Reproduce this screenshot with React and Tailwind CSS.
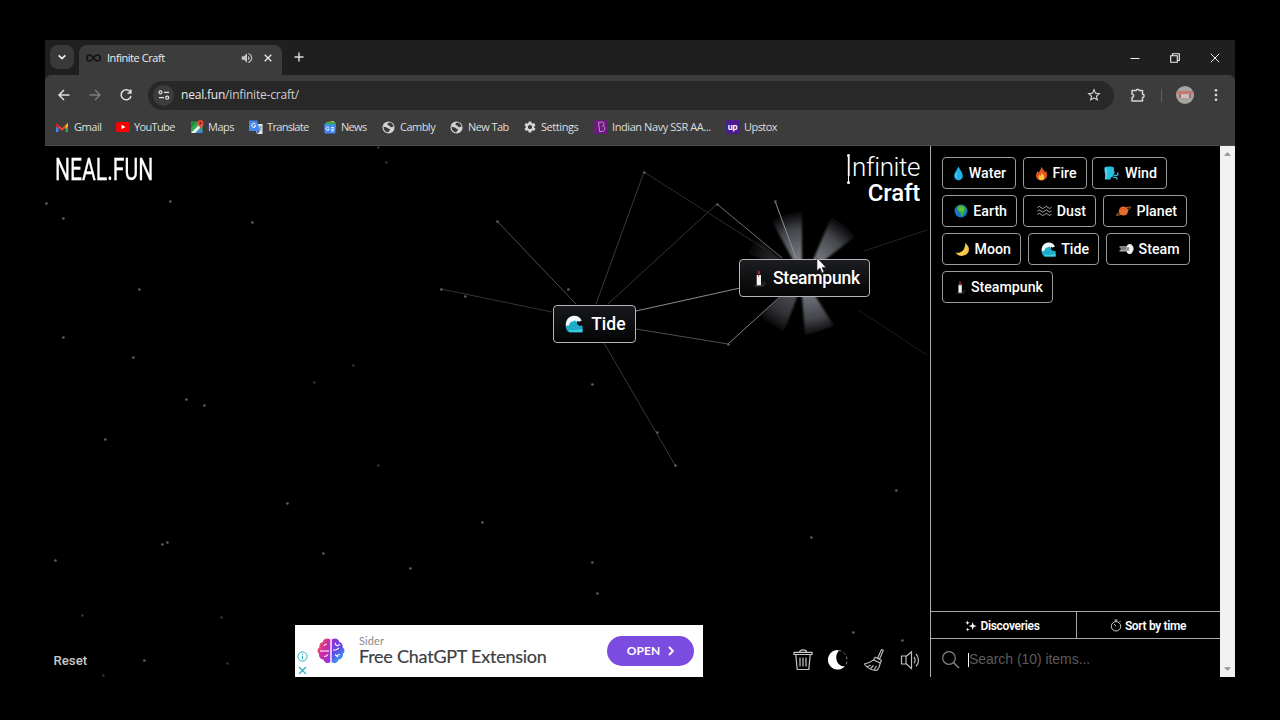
import React from "react";
import { MdStarOutline, MdVolumeUp, MdSettings } from "react-icons/md";

/* ---------- element icons ---------- */
const Svg = ({ box = "0 0 16 16", className, children }) => (
  <svg viewBox={box} className={"shrink-0 " + className} fill="none">
    {children}
  </svg>
);

const icons = {
  Water: (c) => (
    <Svg box="0 0 10 15" className={c}>
      <path d="M5 .5C6 3 9.3 6.500 9.300 10a4.300 4.300 0 0 1-8.600 0C.7 6.500 4 3 5 .5Z" fill="#1fb4e8" />
      <path d="M3 7.500c-.8 1.500-1 3 .1 4" stroke="#7fe0fb" strokeWidth="1" />
    </Svg>
  ),
  Fire: (c) => (
    <Svg box="0 0 12 15" className={c}>
      <path d="M6 .5c.3 2.500 3 3.300 3.300 6 .8-.5.9-1.400.8-2.200 1.200 1.800 1.700 4 1.300 6-.5 2.600-2.700 4.200-5.400 4.200S.9 12.900.6 10.400C.3 8 1.500 6.500 2 5c.5.5.8 1 .9 1.800C4 5 5.800 3.500 6 .5Z" fill="#e8541e" />
      <path d="M6.200 6.500c.2 1.500 2.600 2.500 2.600 4.800 0 1.700-1.200 2.800-2.800 2.800s-2.900-1.100-2.900-2.600c0-1.300.7-1.900 1-2.700.4.4.5.8.6 1.300.8-.8 1.500-1.800 1.500-3.600Z" fill="#ffc83d" />
    </Svg>
  ),
  Wind: (c) => (
    <Svg box="0 0 15 14" className={c}>
      <path d="M.8 1C4 .2 8 .2 9.800 1.500c.5 1.500 0 2.200.2 3.500l.9 1.700-1 .5.1 1.300-1 .6-.2 1.800-1.800.4-.6 2.200H.8c1-2 .2-3.500.4-5.500C.4 6 0 3.500.8 1Z" fill="#25c0de" />
      <path d="M.9 2c1.500.5 2 2 1.300 4.500S2.800 11 1.200 13" stroke="#9ce6f4" strokeWidth=".9" />
      <path d="M9.500 9.300h3.300c1.600 0 1.600-2.400.2-2.300M9 11.300h3c1.200.1 1.300 1.800.2 1.800" stroke="#3fb5d6" strokeWidth="1.300" />
    </Svg>
  ),
  Earth: (c) => (
    <Svg box="0 0 14 14" className={c}>
      <circle cx="7" cy="7" r="6.500" fill="#1673c8" />
      <path d="M4 2c2-1.300 5-1 6.500.4L12 5.500 10.800 7.300l-1 3-1.700 2.300-1.300-1L6.500 8.500 4 7.500 3 5.200Z" fill="#3fae3b" />
      <path d="M5 3.200 9 3l1 2-2 3L5 6Z" fill="#62c43e" />
    </Svg>
  ),
  Dust: (c) => (
    <Svg box="0 0 15 12" className={c}>
      {[2.500, 6, 9.500].map((y) => (
        <path key={y} d={`M.5 ${y}q1.750-2.200 3.500 0t3.500 0 3.500 0 3.500-.3`} stroke="#a3a3a3" strokeWidth="1" />
      ))}
    </Svg>
  ),
  Planet: (c) => (
    <Svg box="0 0 15 14" className={c}>
      <circle cx="7.500" cy="7" r="4.600" fill="#e8692c" />
      <path d="M4 5.500c2-1.500 4-.5 6.500-2" stroke="#d4531f" />
      <path d="M3.800 8.600C1.700 9.700.2 10.600.6 11.200c.5.7 4.500-.8 8.200-3s6.100-4.300 5.700-5c-.3-.5-1.700-.2-3.400.5" stroke="#d98232" strokeWidth="1" />
    </Svg>
  ),
  Moon: (c) => (
    <Svg box="0 0 15 15" className={c}>
      <path d="M10 1c5 3.200 5.300 9 .8 11.800C7.300 15 2.600 13.900.6 10.500 4.500 12 10.800 9 10 1Z" fill="#f5c343" />
      <path d="M3 12c4 .8 8-2 8.500-7" stroke="#ffdf7b" strokeWidth=".8" />
    </Svg>
  ),
  Tide: (c) => (
    <Svg box="0 0 18 18" className={c}>
      <path d="M1 13C-.2 7 3.500 1.500 9 1.500c3.500 0 6 1.700 7.200 4.300-1.500-.5-2.800-.4-3.700.6-1.500 2 .2 4.800 5 4.300V17.300H4C2.500 16.300 1.400 15 1 13Z" fill="#1eaccb" />
      <path d="M1 11.500C0 6 3.500.7 9 .7c3.700 0 6.700 1.800 7.800 5.300l-1.600-.3-.9 1.300-1.500-1.200-1.600 1-1.500-1.600-1.500 1.400C5 6.500 4.200 9 4 11c-.5-1-1.500-.8-3 .5Z" fill="#f4fbff" />
      <path d="M4.500 14.500c3 1.500 8 .3 13-.5v3.300H4.200Z" fill="#3ccbe2" />
    </Svg>
  ),
  Steam: (c) => (
    <Svg box="0 0 15 12" className={c}>
      <path d="M8.500 2C10 .3 13 .8 13.700 3c1.300 1.500 1.200 4.200 0 5.400-.7 2.500-3.400 3.300-5.200 1.800L7.500 8.500v-5Z" fill="#f2f2f2" />
      <path d="M.5 4H8M1.500 5.900H8.500M.5 7.800H8" stroke="#a9a9a9" strokeWidth="1.500" />
      <path d="M8 5h2.200M8 7h2.200" stroke="#444" strokeWidth="1" />
    </Svg>
  ),
  Steampunk: (c) => (
    <Svg box="0 0 12 18" className={c}>
      <path d="M2.700 6h4.300v10.500h-4.300Z" fill="#f4f4f4" />
      <path d="M4.700 1c1 1.500 1.500 2.400 1.200 3.500-.3.800-2.100.8-2.300 0-.2-1.100.4-2 1.100-3.500Z" fill="#a5343a" />
      <path d="M4.700 4v3.500" stroke="#8e2b30" />
      <path d="M.5 16.900h9" stroke="#555" strokeWidth="1" />
      <circle cx="10" cy="14.700" r="1.300" stroke="#404040" strokeWidth=".8" />
    </Svg>
  ),
};

const rows = [
  [["Water", "w-[74px]", "w-[11px] h-[15px] mr-[5px]"], ["Fire", "w-[64px] ml-[6.500px]", "w-[13px] h-[15px] mr-[5px]"], ["Wind", "w-[75px] ml-[5.500px]", "w-[15px] h-[14px] mr-[6px]"]],
  [["Earth", "w-[75px]", "w-[14px] h-[14px] mr-[5px]"], ["Dust", "w-[73px] ml-[6px]", "w-[15px] h-[12px] mr-[5px]"], ["Planet", "w-[84px] ml-[7px]", "w-[15px] h-[14px] mr-[5px]"]],
  [["Moon", "w-[79px]", "w-[15px] h-[15px] mr-[5px]"], ["Tide", "w-[71px] ml-[7px]", "w-[15px] h-[15px] mr-[5px]"], ["Steam", "w-[84px] ml-[6.500px]", "w-[15px] h-[12px] mr-[5px]"]],
  [["Steampunk", "w-[111px]", "w-[10px] h-[14px] mr-[5px]"]],
];

const Chip = ({ name, size, icon }) => (
  <div className={"flex h-[31.500px] items-center justify-end rounded-[4px] border border-[#9a9a9a] pr-[9px] pt-px text-[14.200px] font-medium text-white " + size}>
    {icons[name](icon)}
    <span className="whitespace-nowrap">{name}</span>
  </div>
);

/* ---------- browser chrome ---------- */
const Globe = () => (
  <Svg box="0 0 14 14" className="size-[13px]">
    <circle cx="7" cy="7" r="6.500" fill="#d4d4d4" />
    <path d="M8.500 1.700c-2 .3-3 1.200-2.500 2.300.6 1 2.200.6 2.500 1.600.3.900 1.200 1.300 2 .8s1.600-.3 1.900.3c0-2.400-1.500-4.500-3.900-5ZM1.700 6.200c1.800.1 4 .6 4.800 1.600.6 1 2.300.5 2.200 1.700-.1 1.100-1.500 1-1.700 2.700-2.800 0-5.500-2.600-5.300-6Z" fill="#3c3c3c" />
  </Svg>
);

const bookmarks = [
  ["Gmail", "w-[60px]", "tracking-[-0.45px]", (
    <Svg box="0 0 14 12" className="-ml-px h-[12px] w-[14px]">
      <path d="M1 2v9h2.500V5Z" fill="#4285f4" /><path d="M13 2v9h-2.500V5Z" fill="#34a853" />
      <path d="M1 2.200 7 7l6-4.800v3L7 9.700 1 5.200Z" fill="#ea4335" /><path d="M10.500 4 13 2v3.500l-2.500 2Z" fill="#fbbc04" /><path d="M1 2l2.500 2v3.500L1 5.500Z" fill="#c5221f" />
    </Svg>)],
  ["YouTube", "w-[74px]", "tracking-[-0.65px]", (
    <Svg box="0 0 14 14" className="size-[14px]">
      <rect y="2" width="14" height="10" rx="2" fill="#f00" /><path d="m5.500 4.800 4 2.200-4 2.200Z" fill="#fff" />
    </Svg>)],
  ["Maps", "w-[59px]", "tracking-[-0.5px]", (
    <Svg box="0 0 14 14" className="size-[14px]">
      <rect x="1" y="1.500" width="11.500" height="11.500" rx="1" fill="#34a853" />
      <path d="M1 13 12.500 1.500 13 5 5 13Z" fill="#f5f5f5" /><path d="M6 13l4-4.500 3 4.500Z" fill="#4285f4" /><path d="M1 8 7 2H2L1 4Z" fill="#1e8e3e" />
      <path d="M10.500 0a3 3 0 0 1 3 3c0 2.200-2 2.800-3 5.500C9.500 5.800 7.500 5.200 7.500 3a3 3 0 0 1 3-3Z" fill="#ea4335" /><circle cx="10.500" cy="3" r="1" fill="#811411" />
    </Svg>)],
  ["Translate", "w-[74px]", "tracking-[-0.68px]", (
    <Svg box="0 0 14 14" className="size-[14px]">
      <path d="M5 4h8.500v10H8Z" fill="#e4e7eb" /><path d="M0 .5h8l3 10.500H0Z" fill="#4688f1" /><path d="M8 11h3l-3 3Z" fill="#2a56c6" />
      <path d="M6.300 4.100a2 2 0 1 0 .4 1.700H4.900" stroke="#fff" strokeWidth="1" /><path d="M9.800 7h3M11.300 6v1c0 1.500-.8 2.500-1.300 3M10.500 8l2 2.500" stroke="#6f7783" strokeWidth=".7" />
    </Svg>)],
  ["News", "w-[59px]", "tracking-[-0.7px]", (
    <Svg box="0 0 14 14" className="size-[14px]">
      <path d="m2 3.500 8-2.500.8 4H2Z" fill="#e1554a" /><path d="M3 2.200 11 1v4H4Z" fill="#f0b93a" /><path d="M3 2h9.500v3H3Z" fill="#39a45b" />
      <path d="M1 4.500h12l-.7 9H1.700Z" fill="#4688f1" />
      <path d="M6 7.600a1.700 1.700 0 1 0 .3 1.500H4.900M8 7.500h3M8 9.200h3.500M8 10.900h3" stroke="#fff" strokeWidth=".9" />
    </Svg>)],
  ["Cambly", "w-[68px]", "tracking-[-0.52px]", <Globe />],
  ["New Tab", "w-[73px]", "tracking-[-0.6px]", <Globe />],
  ["Settings", "w-[71px]", "tracking-[-0.42px]", <MdSettings className="size-[14px] text-[#d6d6d6]" />],
  ["Indian Navy SSR AA...", "w-[132px]", "tracking-[-0.42px]", (
    <Svg box="0 0 14 14" className="size-[14px]">
      <rect width="14" height="14" rx="1" fill="#6c1a7c" />
      <path d="m4.500 2.500 3.500-.4c2.500-.1 2.600 2.900.5 3.800 2.900-.2 3.200 4.500.2 5.500l-3 .2Z" stroke="#c79bd0" strokeWidth=".9" />
    </Svg>)],
  ["Upstox", "w-[60px]", "tracking-[-0.55px]", (
    <span className="flex size-[14px] items-center justify-center rounded-[2px] bg-[#4a1c90] pb-px font-['Inter',sans-serif] text-[8px] font-bold leading-none tracking-[-0.200px] text-white">up</span>)],
];

const Chrome = () => (
  <header className="shrink-0 font-['Open_Sans',sans-serif] text-[11px] text-[#dedede]">
    <div className="flex h-[35px] bg-[#1f1f1f]">
      <div className="ml-[5px] mt-[5px] flex size-[24px] items-center justify-center rounded-[8px] bg-[#393939]">
        <Svg box="0 0 10 10" className="size-[10px]"><path d="m1.700 3.300 3.300 3.300 3.300-3.300" stroke="#eee" strokeWidth="1.700" /></Svg>
      </div>
      <div className="ml-[5px] mt-[5px] flex h-[30px] w-[203px] items-center rounded-t-[8px] bg-[#3c3c3c] pb-[4px] pl-[7px]">
        <Svg box="0 0 16 10" className="h-[10px] w-[15px]">
          <path d="M8 5C6.500 2.800 5.500 1.800 4 1.800a3.200 3.200 0 0 0 0 6.400c1.500 0 2.500-1 4-3.200s2.500-3.200 4-3.200a3.200 3.200 0 0 1 0 6.400C10.500 8.200 9.500 7.200 8 5Z" stroke="#141414" strokeWidth="1.700" />
        </Svg>
        <span className="ml-[6px] w-[133px] tracking-[-0.450px] text-[#ececec]">Infinite Craft</span>
        <MdVolumeUp className="size-[14px] text-[#c4c4c4]" />
        <Svg box="0 0 10 10" className="ml-[9px] size-[10px]"><path d="m1.700 1.700 6.600 6.600M8.300 1.700 1.700 8.300" stroke="#e8e8e8" strokeWidth="1.300" /></Svg>
      </div>
      <Svg box="0 0 10 10" className="ml-[12px] mt-[12px] size-[10px]"><path d="M5 .5v9M.5 5h9" stroke="#dedede" strokeWidth="1.400" /></Svg>
      <div className="ml-auto mr-[15px] flex items-center gap-[30px]">
        <Svg box="0 0 10 10" className="size-[10px]"><path d="M.5 5.500h9" stroke="#f0f0f0" /></Svg>
        <Svg box="0 0 10 10" className="size-[10px]"><path d="M.7 2.700h6.600v6.600H.7ZM2.500 2.500V.7h6.800v6.800H7.500" stroke="#f0f0f0" strokeWidth="1.100" /></Svg>
        <Svg box="0 0 10 10" className="size-[10px]"><path d="m.8.8 8.400 8.400M9.200.8.8 9.200" stroke="#f0f0f0" /></Svg>
      </div>
    </div>
    <div className="bg-[#1f1f1f]">
      <div className="flex h-[40px] items-center rounded-t-[6px] bg-[#3c3c3c] pl-[12px] pr-[14px]">
        <Svg box="0 0 14 14" className="size-[14px]"><path d="M12.500 7h-10M7 2 2 7l5 5" stroke="#dedede" strokeWidth="1.500" /></Svg>
        <Svg box="0 0 14 14" className="ml-[17px] size-[14px]"><path d="M1.500 7h10M7 2l5 5-5 5" stroke="#7d7d7d" strokeWidth="1.400" /></Svg>
        <Svg box="0 0 14 14" className="ml-[17px] size-[14px]"><path d="M11.400 4.200A5 5 0 1 0 12 8M11.900 1.500v3.400H8.500" stroke="#dedede" strokeWidth="1.500" /></Svg>
        <div className="ml-[15px] flex h-[29px] w-[966px] items-center rounded-full bg-[#282828] pl-[5px] pr-[12px]">
          <span className="flex size-[21px] items-center justify-center rounded-full bg-[#3c3c3c]">
            <Svg box="0 0 12 10" className="h-[10px] w-[12px]">
              <circle cx="2.500" cy="2.300" r="1.500" stroke="#e3e3e3" strokeWidth="1.200" /><path d="M6 2.300h5M1 7.700h5" stroke="#e3e3e3" strokeWidth="1.300" /><circle cx="9.200" cy="7.700" r="1.500" stroke="#e3e3e3" strokeWidth="1.200" />
            </Svg>
          </span>
          <span className="ml-[7px] text-[12px] tracking-[-0.200px] text-[#ececec]">neal.fun<span className="text-[#cfcfcf]">/infinite-craft/</span></span>
          <MdStarOutline className="ml-auto size-[16px] text-[#d8d8d8]" />
        </div>
        <Svg box="0 0 16 16" className="ml-[16px] size-[16px]">
          <path d="M2 3.500h4.200a1.600 1.600 0 0 1 3.100 0h3.200v3.700a1.600 1.600 0 0 1 0 3.200v3.500H2v-3.300c2.200-.3 2.200-3.200 0-3.500Z" stroke="#d4d4d4" strokeWidth="1.500" strokeLinejoin="round" />
        </Svg>
        <span className="ml-[15px] h-[13px] w-px bg-[#606060]" />
        <span className="ml-[14px] flex size-[18px] flex-col overflow-hidden rounded-full bg-[#a5a5a1]">
          <span className="mt-[5px] h-[3px] bg-[#c07a75]" />
          <span className="ml-[3px] h-[4px] w-[12px] border-x-2 border-[#a86a68] bg-[#cdbdba]" />
        </span>
        <Svg box="0 0 4 14" className="ml-[20px] h-[14px] w-[4px]"><circle cx="2" cy="2.200" r="1.300" fill="#dedede" /><circle cx="2" cy="7" r="1.300" fill="#dedede" /><circle cx="2" cy="11.800" r="1.300" fill="#dedede" /></Svg>
      </div>
    </div>
    <nav className="flex h-[31px] items-center border-b border-[#4c4c4c] bg-[#3c3c3c] pb-[6px] pl-[10px]">
      {bookmarks.map(([label, width, tracking, icon]) => (
        <div key={label} className={"flex shrink-0 items-center whitespace-nowrap " + width}>
          <span className="flex w-[15px] shrink-0 justify-center">{icon}</span>
          <span className={"ml-[4px] " + tracking}>{label}</span>
        </div>
      ))}
    </nav>
  </header>
);

/* ---------- play field ---------- */
const stars = [[46,203],[63,218],[170,201],[252,222],[139,289],[63,337],[133,357],[353,365],[314,382],[186,399],[204,405],[105,439],[378,465],[287,503],[162,544],[167,542],[55,560],[323,553],[410,568],[221,617],[82,615],[144,660],[227,663],[103,675],[482,522],[592,384],[592,562],[597,593],[811,537],[896,490],[853,632],[902,640],[568,289],[465,296],[441,289],[497,221],[644,172],[717,204],[775,201],[728,344],[657,432],[675,465],[386,162],[378,147]];
const dim = new Set([19, 20, 22, 23, 8, 7, 12, 42, 43]);
const links = [
  [497,221,576,304,"#4d4d4d"],[441,289,552,312,"#343434"],[644,172,596,304,"#3a3a3a"],[717,204,608,304,"#363636"],
  [636,311,740,288,"#8c8c8c"],[636,329,728,344,"#505050"],[728,344,781,296,"#7c7c7c"],[604,343,675,465,"#363636"],
  [644,172,765,249,"#2b2b2b"],[717,204,782,258,"#6f6f6f"],[775,201,796,258,"#909090"],[864,251,927,230,"#222"],[858,310,927,355,"#1c1c1c"],
];

const Field = () => (
  <svg viewBox="45 146 885 531" className="absolute inset-0 h-full w-full" fill="none">
    <defs>
      <radialGradient id="burst" gradientUnits="userSpaceOnUse" cx="805" cy="274" r="64">
        <stop offset="0" stopColor="#8a8c94" />
        <stop offset=".3" stopColor="#74767e" />
        <stop offset=".7" stopColor="#45474d" />
        <stop offset="1" stopColor="#000" />
      </radialGradient>
      <filter id="soft" x="-20%" y="-20%" width="140%" height="140%"><feGaussianBlur stdDeviation="1" /></filter>
    </defs>
    <g fill="url(#burst)" filter="url(#soft)">
      <path d="M802 277V205L768 214L792 258L797 277Z" />
      <path d="M806 277 835 208 861 232 826 259Z" />
      <path d="M803 277 802 297 805 336 834 326 816 297Z" />
      <path d="M798 285 797 297 784 332 758 316 782 295Z" opacity=".7" />
      <path d="M790 268 740 252 755 236Z" opacity=".4" />
    </g>
    {links.map(([a, b, c, d, color], i) => (
      <path key={i} d={`M${a} ${b}L${c} ${d}`} stroke={color} />
    ))}
    {stars.map(([x, y], i) => (
      <circle key={i} cx={x + 0.4} cy={y + 0.5} r="1.350" fill={dim.has(i) ? "#333" : "#5e5e5e"} />
    ))}
  </svg>
);

const Ad = () => (
  <div className="absolute left-[250px] top-[479px] flex h-[52px] w-[408px] items-center bg-white pl-[2px] pr-[9px]">
    <div className="flex flex-col gap-[3px] pt-[24px]">
      <Svg box="0 0 11 11" className="size-[11px]"><circle cx="5.500" cy="5.500" r="4.600" stroke="#25aec4" /><path d="M5.500 4.800v3.400M5.500 2.700v1.200" stroke="#25aec4" /></Svg>
      <Svg box="0 0 11 11" className="size-[11px]"><path d="m2 2 7 7M9 2 2 9" stroke="#25aec4" strokeWidth="1.200" /></Svg>
    </div>
    <svg viewBox="0 0 28 26" className="ml-[9px] h-[26px] w-[28px]" fill="none">
      <defs>
        <linearGradient id="bl" x1="0" y1="0" x2="1" y2="1"><stop stopColor="#ef7a3c" /><stop offset=".45" stopColor="#d62aa0" /><stop offset="1" stopColor="#8a35e0" /></linearGradient>
        <linearGradient id="br" x1="0" y1="0" x2=".5" y2="1"><stop stopColor="#a22bd0" /><stop offset=".55" stopColor="#6148e6" /><stop offset="1" stopColor="#34a9f0" /></linearGradient>
      </defs>
      <path d="M13.300 1.500C10-.5 6 .8 5.800 4 3 4.500 2 7 2.500 9.300c-2.500 1.500-2.600 5-.4 6.500C1.500 19 4 21.500 6.300 21.500 7.500 25 11 26 13.300 24.300Z" fill="url(#bl)" />
      <path d="M14.700 1.500C18-.5 22 .8 22.200 4c2.800.5 3.800 3 3.300 5.300 2.500 1.500 2.600 5 .4 6.500.6 3.200-1.900 5.700-4.200 5.700C20.500 25 17 26 14.700 24.300Z" fill="url(#br)" />
      <path d="M3 13h9M7 7.500 9.500 6M7 18.500c2 0 3.500-1 4-2M18 5l1.500 3M20 8l3-1.500M16 12h3l3-2M18 16.500l3 2.500M19.500 17.500l3.500-1" stroke="#fff" strokeWidth="1.100" />
    </svg>
    <div className="ml-[14px] flex flex-col pb-[2px] font-['Lato',sans-serif]">
      <span className="text-[11px] leading-[13px] tracking-[0.100px] text-[#8b8b8b]">Sider</span>
      <span className="whitespace-nowrap text-[18px] leading-[19px] tracking-[-0.240px] text-[#3c4043] [-webkit-text-stroke:0.200px_#3c4043]">Free ChatGPT Extension</span>
    </div>
    <div className="ml-auto flex h-[30px] w-[87px] items-center justify-center gap-[8px] rounded-full bg-[#7c4be0] font-['Lato',sans-serif] text-[12px] font-bold text-white">
      OPEN
      <Svg box="0 0 6 10" className="h-[10px] w-[6px]"><path d="m1 1 4 4-4 4" stroke="#fff" strokeWidth="1.900" /></Svg>
    </div>
  </div>
);

const Tools = () => (
  <div className="absolute left-[748px] top-[502px] flex gap-[13px]">
    <Svg box="0 0 20 24" className="h-[24px] w-[20px]">
      <path d="M1 6.500V4.300h18v2.200ZM6.500 4.200c0-3 7-3 7 0M2.800 6.700l1.400 14.800h11.600l1.400-14.800" stroke="#c9c9c9" strokeWidth="1.200" />
      <path d="M7 9.500v9M10 9.500v9M13 9.500v9" stroke="#b5b5b5" strokeWidth="1.300" />
    </Svg>
    <Svg box="0 0 22 24" className="h-[24px] w-[22px]">
      <path d="M11 2a9.800 9.800 0 1 0 8 16.300C11.500 19 7 9 13 2.500Z" fill="#fff" />
      <path d="M13 2.500a9.800 9.800 0 0 1 5.800 15.800" stroke="#888" strokeWidth="1" strokeDasharray="2.500 2.500" />
    </Svg>
    <Svg box="0 0 22 24" className="ml-[2px] h-[24px] w-[22px]">
      <path d="m18.500 1.500 1.800.8-3.600 8.500-2-.9ZM12.200 9.200l6.300 3-1.300 2.900-6.600-3.200ZM10.600 11.900C8 14 5 15.300 1.300 16c2.500 3.600 7 6.200 12.500 6.500 2-2 3.200-4.500 3.400-7.400M4.500 18.500l3.200-1.300M7.700 20.500l2.800-3M11 22l2.500-4" stroke="#bdbdbd" strokeWidth="1.150" strokeLinejoin="round" />
    </Svg>
    <Svg box="0 0 20 24" className="ml-[2px] h-[24px] w-[20px]">
      <path d="M1.500 8H6v8H1.500ZM6 8.500 11.500 3.700v17L6 15.500M14 9c1.500 1.500 1.500 4.800 0 6.300M16 6c3.300 3.300 3.300 9 0 12.300" stroke="#bdbdbd" strokeWidth="1.200" />
    </Svg>
  </div>
);

const Board = () => (
  <main className="relative w-[885px] shrink-0 overflow-hidden bg-black">
    <Field />
    <div className="absolute left-[10px] top-[4px] origin-left scale-x-[0.660] font-['Roboto',sans-serif] text-[32px] font-normal leading-[38px] text-white [-webkit-text-stroke:0.300px_#fff]">NEAL.FUN</div>
    <div className="absolute right-[10px] top-[8px] flex flex-col items-end text-white">
      <div className="relative flex h-[27px] items-center font-light leading-[27px]">
        <span className="text-[26px]">I</span>
        <span className="text-[26px] tracking-[-0.400px]">nfinite</span>
        <span className="absolute left-[3px] top-[1px] h-[28px] w-px bg-white" />
        <span className="absolute left-[2px] top-0 size-[3px] rounded-full bg-white" />
        <span className="absolute bottom-[-3px] left-[2px] size-[3px] rounded-full bg-white" />
      </div>
      <div className="text-[24px] font-medium leading-[25px] tracking-[-0.200px]">Craft</div>
    </div>

    <div className="absolute left-[507.500px] top-[159px] flex h-[38px] w-[83px] items-center justify-end rounded-[4px] border border-[#b5b5b5] bg-linear-to-b from-[#17191c] to-[#050506] pr-[9px] text-[17.500px] font-medium text-white">
      {icons.Tide("w-[18px] h-[18px] mr-[8px]")}<span>Tide</span>
    </div>
    <div className="absolute left-[694px] top-[113px] flex h-[38px] w-[131px] items-center justify-end rounded-[4px] border border-[#b5b5b5] bg-linear-to-b from-[#1c1e21] to-[#050506] pr-[9px] text-[17.500px] font-medium tracking-[-0.200px] text-white">
      {icons.Steampunk("w-[12px] h-[18px] mr-[7px]")}<span>Steampunk</span>
    </div>
    <svg viewBox="0 0 11 17" className="absolute left-[771px] top-[111px] h-[17px] w-[11px]">
      <path d="M1 .8v13l3-2.700 2 4.800 2-.9-2-4.600h4Z" fill="#fff" stroke="#222" strokeWidth=".6" />
    </svg>

    <div className="absolute left-[8.500px] top-[505px] text-[13.200px] font-medium leading-[20px] text-[#c9c9c9]">Reset</div>
    <Ad />
    <Tools />
  </main>
);

const Sidebar = () => (
  <aside className="flex w-[290px] shrink-0 flex-col border-l border-[#b0b0b0] bg-black">
    <div className="flex flex-1 flex-col gap-[6.500px] pl-[11px] pt-[11px]">
      {rows.map((row, i) => (
        <div key={i} className="flex">
          {row.map(([name, size, icon]) => (
            <Chip key={name} name={name} size={size} icon={icon} />
          ))}
        </div>
      ))}
    </div>
    <div className="flex h-[28px] border-y border-[#a8a8a8] pt-px text-[12px] font-semibold text-white">
      <div className="-mt-px flex w-[146px] items-center justify-center gap-[3px] border-r border-[#a8a8a8] pr-[2px] pt-px">
        <Svg box="0 0 12 12" className="size-[12px]">
          <path d="m7.700 2 1 3 3 1-3 1-1 3-1-3-3-1 3-1ZM2.500.5l.6 1.700 1.700.6-1.700.6-.6 1.700-.6-1.700L.2 2.800l1.700-.6ZM2.700 7.500l.5 1.500 1.500.5-1.500.5-.5 1.500-.5-1.500-1.500-.5L2.200 9Z" fill="#fff" />
        </Svg>
        <span className="tracking-[-0.300px]">Discoveries</span>
      </div>
      <div className="flex flex-1 items-center justify-center gap-[3px] pr-px">
        <Svg box="0 0 12 13" className="h-[13px] w-[12px]">
          <circle cx="6" cy="7.300" r="4.700" stroke="#ccc" strokeWidth="1" /><path d="M4.500 1h3M6 1v1.600M9.500 3l1-1M6 7.300 4 5" stroke="#ccc" strokeWidth="1" />
        </Svg>
        <span className="tracking-[-0.350px]">Sort by time</span>
      </div>
    </div>
    <div className="flex h-[38px] items-center pl-[10px] pt-[3px]">
      <Svg box="0 0 20 20" className="size-[20px]"><circle cx="8" cy="8" r="6.300" stroke="#858585" strokeWidth="1.200" /><path d="m12.700 12.700 5.300 5.300" stroke="#858585" strokeWidth="1.500" /></Svg>
      <span className="ml-[7px] h-[14px] w-px bg-white" />
      <span className="font-['Liberation_Sans',Arial,sans-serif] text-[14px] tracking-[-0.050px] text-[#5b5b5b]">Search (10) items...</span>
    </div>
  </aside>
);

export default function App() {
  return (
    <div className="h-[720px] w-[1280px] overflow-hidden bg-black px-[45px] pt-[40px] font-['Roboto',sans-serif]">
      <div className="flex h-[637px] w-[1190px] flex-col">
        <Chrome />
        <div className="flex min-h-0 flex-1">
          <Board />
          <Sidebar />
          <div className="flex w-[15px] flex-col items-center justify-between bg-[#f1f1f1] py-[6px]">
            <Svg box="0 0 8 4" className="h-[4px] w-[7px]"><path d="M4 0 8 4H0Z" fill="#8f8f8f" /></Svg>
            <Svg box="0 0 8 4" className="h-[4px] w-[7px]"><path d="M0 0h8L4 4Z" fill="#8f8f8f" /></Svg>
          </div>
        </div>
      </div>
    </div>
  );
}
